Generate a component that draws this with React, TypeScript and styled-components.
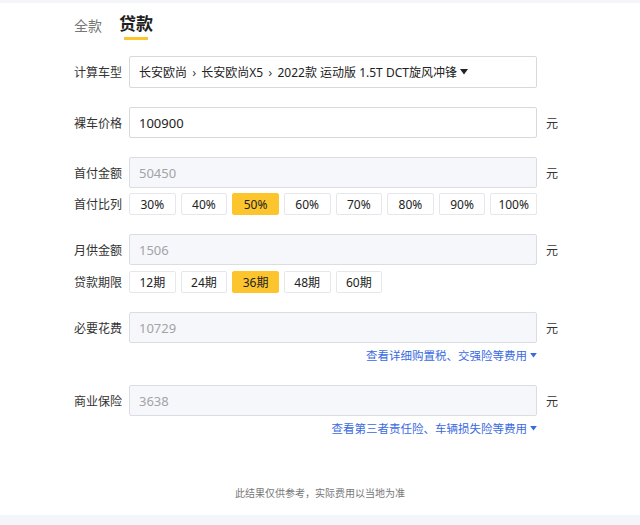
import styled, { createGlobalStyle } from "styled-components";

const GlobalStyle = createGlobalStyle`
  html, body {
    margin: 0;
    padding: 0;
    background: #ffffff;
    font-family: "Noto Sans", "Noto Sans CJK SC", sans-serif;
    color: #333;
  }
`;

const rates = ["30%", "40%", "50%", "60%", "70%", "80%", "90%", "100%"];
const terms = ["12期", "24期", "36期", "48期", "60期"];

const Caret = () => (
  <svg width="8" height="6" viewBox="0 0 8 6">
    <path d="M0 0 H8 L4 5.5 Z" fill="currentColor" />
  </svg>
);

const App = (): JSX.Element => {
  return (
    <Page>
      <GlobalStyle />
      <TopStrip />
      <Content>
        <Tabs>
          <Tab>全款</Tab>
          <Tab $active>贷款</Tab>
        </Tabs>

        <Form>
          <Row $top={16}>
            <Label>计算车型</Label>
            <Select>
              长安欧尚 <Sep>›</Sep> 长安欧尚X5 <Sep>›</Sep> 2022款 运动版 1.5T DCT旋风冲锋
              <Caret />
            </Select>
          </Row>

          <Row $top={19}>
            <Label>裸车价格</Label>
            <Box>100900</Box>
            <Unit>元</Unit>
          </Row>

          <Row $top={19}>
            <Label>首付金额</Label>
            <Box $disabled>50450</Box>
            <Unit>元</Unit>
          </Row>
          <Row $top={5}>
            <Label>首付比列</Label>
            <Chips>
              {rates.map((r) => (
                <Chip key={r} $active={r === "50%"}>
                  {r}
                </Chip>
              ))}
            </Chips>
          </Row>

          <Row $top={19}>
            <Label>月供金额</Label>
            <Box $disabled>1506</Box>
            <Unit>元</Unit>
          </Row>
          <Row $top={6}>
            <Label>贷款期限</Label>
            <Chips>
              {terms.map((t) => (
                <Chip key={t} $active={t === "36期"}>
                  {t}
                </Chip>
              ))}
            </Chips>
          </Row>

          <Row $top={19}>
            <Label>必要花费</Label>
            <Box $disabled>10729</Box>
            <Unit>元</Unit>
          </Row>
          <LinkRow $top={5}>
            查看详细购置税、交强险等费用
            <Caret />
          </LinkRow>

          <Row $top={23}>
            <Label>商业保险</Label>
            <Box $disabled>3638</Box>
            <Unit>元</Unit>
          </Row>
          <LinkRow $top={5}>
            查看第三者责任险、车辆损失险等费用
            <Caret />
          </LinkRow>
        </Form>

        <Note>此结果仅供参考，实际费用以当地为准</Note>
      </Content>
      <BottomStrip />
    </Page>
  );
};
export default App;

const Page = styled.div`
  width: 640px;
  height: 525px;
  display: flex;
  flex-direction: column;
  background: #fff;
  overflow: hidden;
`;

const TopStrip = styled.div`
  height: 3px;
  background: #f4f5f9;
`;

const BottomStrip = styled.div`
  height: 10px;
  background: #f4f5f9;
`;

const Content = styled.div`
  flex: 1;
  display: flex;
  flex-direction: column;
  padding-left: 74px;
`;

const Tabs = styled.div`
  display: flex;
  gap: 17px;
  height: 37px;
`;

const Tab = styled.div<{ $active?: boolean }>`
  position: relative;
  height: 37px;
  display: flex;
  align-items: center;
  padding-top: ${(p) => (p.$active ? "2px" : "6px")};
  box-sizing: border-box;
  font-size: ${(p) => (p.$active ? "17px" : "14px")};
  font-weight: ${(p) => (p.$active ? 700 : 400)};
  color: ${(p) => (p.$active ? "#1e1e1e" : "#777")};

  &::after {
    content: "";
    display: ${(p) => (p.$active ? "block" : "none")};
    position: absolute;
    left: 50%;
    bottom: 0;
    width: 24px;
    height: 3px;
    margin-left: -12px;
    background: #fdc52d;
  }
`;

const Form = styled.div`
  display: flex;
  flex-direction: column;
`;

const Row = styled.div<{ $top: number }>`
  display: flex;
  align-items: center;
  margin-top: ${(p) => p.$top}px;
`;

const Label = styled.div`
  width: 55px;
  flex: none;
  font-size: 12px;
  color: #333;
`;

const Box = styled.div<{ $disabled?: boolean }>`
  width: 408px;
  height: 31px;
  box-sizing: border-box;
  display: flex;
  align-items: center;
  padding: 0 9px;
  border: 1px solid ${(p) => (p.$disabled ? "#dcdde3" : "#d8d9df")};
  border-radius: 2px;
  background: ${(p) => (p.$disabled ? "#f6f7fa" : "#fff")};
  color: ${(p) => (p.$disabled ? "#a3a3a8" : "#222")};
  font-size: 13px;
`;

const Select = styled(Box)`
  height: 32px;
  font-size: 12px;
  color: #222;
  white-space: pre;

  svg {
    margin-left: 3px;
    color: #222;
  }
`;

const Sep = styled.span`
  font-size: 13px;
  color: #444;
  margin: 0 2px;
`;

const Unit = styled.div`
  margin-left: 9px;
  font-size: 12px;
  color: #333;
`;

const Chips = styled.div`
  width: 408px;
  display: grid;
  grid-template-columns: repeat(8, 1fr);
  gap: 5px;
`;

const Chip = styled.div<{ $active?: boolean }>`
  height: 22px;
  box-sizing: border-box;
  display: flex;
  align-items: center;
  justify-content: center;
  font-size: 12px;
  color: #222;
  border: 1px solid ${(p) => (p.$active ? "#fdc52d" : "#e6e7ec")};
  background: ${(p) => (p.$active ? "#fdc52d" : "#fff")};
  border-radius: 2px;
`;

const LinkRow = styled.div<{ $top: number }>`
  width: 463px;
  display: flex;
  align-items: center;
  justify-content: flex-end;
  gap: 3px;
  margin-top: ${(p) => p.$top}px;
  height: 14px;
  font-size: 11.5px;
  color: #3a6ae0;

  svg {
    width: 7px;
    height: 5px;
  }
`;

const Note = styled.div`
  margin-top: auto;
  margin-bottom: 15px;
  width: 492px;
  text-align: center;
  font-size: 10px;
  color: #777;
`;
